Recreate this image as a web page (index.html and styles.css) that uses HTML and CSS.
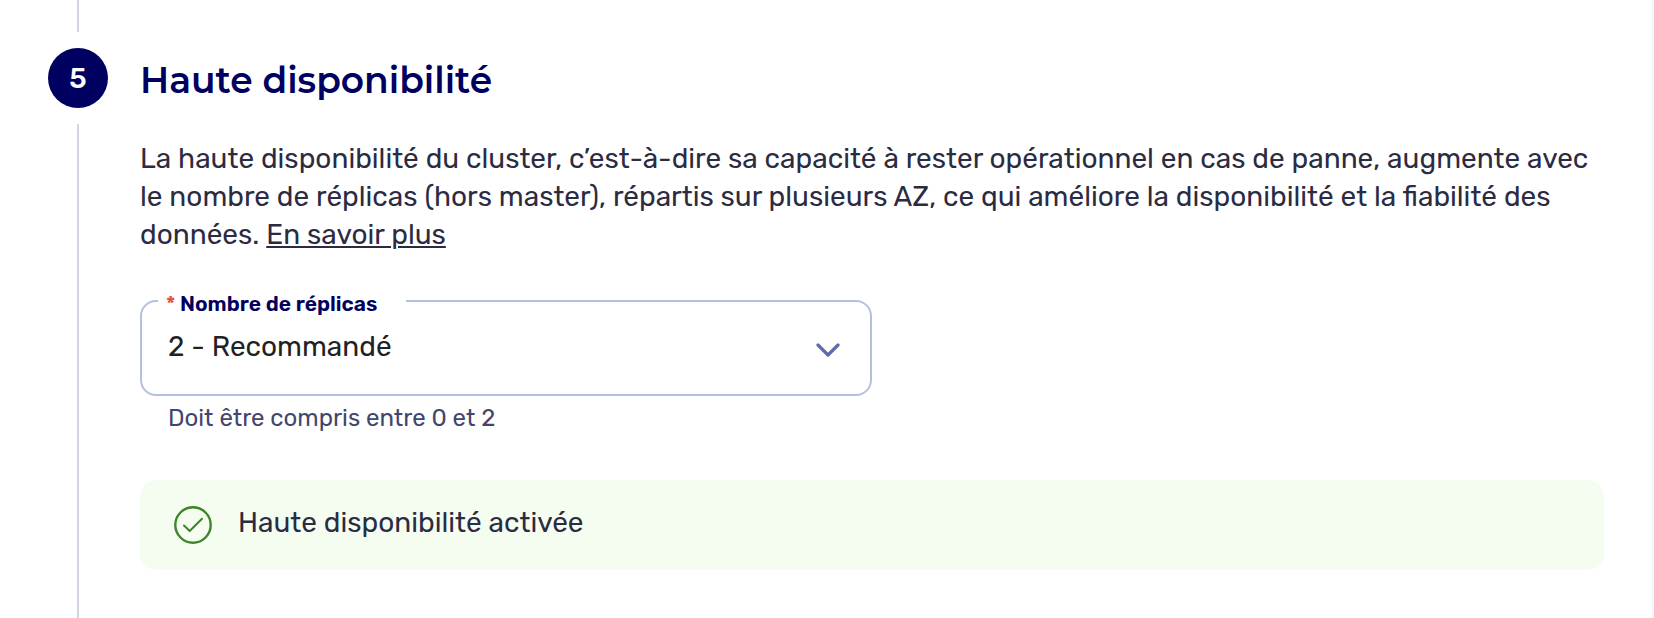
FILE: index.html
```html
<!DOCTYPE html>
<html lang="fr">
<head>
    <meta charset="UTF-8">
    <meta name="viewport" content="width=device-width, initial-scale=1.0">
    <title>Haute disponibilité</title>
    <link rel="stylesheet" href="styles.css">
</head>
<body>

    <main class="panel">
        <section class="step">
            <div class="step-rail">
                <span class="step-line step-line-top"></span>
                <span class="step-number">5</span>
                <span class="step-line step-line-bottom"></span>
            </div>

            <div class="step-content">
                <h2 class="step-title">Haute disponibilité</h2>

                <p class="step-description">
                    La haute disponibilité du cluster, c’est-à-dire sa capacité à rester opérationnel en cas de panne, augmente avec
                    le nombre de réplicas (hors master), répartis sur plusieurs AZ, ce qui améliore la disponibilité et la fiabilité des
                    données. <a href="#">En savoir plus</a>
                </p>

                <div class="field">
                    <label class="field-label" for="replicas"><span class="required">*</span> Nombre de réplicas</label>
                    <select class="field-select" id="replicas" aria-describedby="replicasHint">
                        <option value="0">0</option>
                        <option value="1">1</option>
                        <option value="2" selected>2 - Recommandé</option>
                    </select>
                    <svg class="field-chevron" width="24" height="16" viewBox="0 0 24 16" aria-hidden="true">
                        <path d="M2 3 L12 13 L22 3" fill="none" stroke="#5f6bab" stroke-width="3.2" stroke-linecap="round" stroke-linejoin="round"/>
                    </svg>
                </div>
                <p class="field-hint" id="replicasHint">Doit être compris entre 0 et 2</p>

                <div class="alert" role="status">
                    <svg class="alert-icon" width="38" height="38" viewBox="0 0 38 38" aria-hidden="true">
                        <g fill="none" stroke="#3d8529" stroke-width="2" stroke-linecap="round" stroke-linejoin="round">
                            <circle cx="19" cy="19" r="17.7" stroke-width="2.4"/>
                            <path d="M10 19.5 L15.7 25 L28 12.8"/>
                        </g>
                    </svg>
                    <span>Haute disponibilité activée</span>
                </div>
            </div>
        </section>
    </main>

</body>
</html>
```

FILE: styles.css
```css
*, *::before, *::after {
    box-sizing: border-box;
    margin: 0;
    padding: 0;
}

body {
    font-family: Rubik, Roboto, sans-serif;
    font-size: 28px;
    color: #2b2b42;
    background-color: #fff;
}

.panel {
    min-height: 100vh;
    display: flex;
    border-right: 2px solid #f5f5fe;
}

.step {
    flex: 1;
    display: flex;
    gap: 32px;
    padding: 0 48px;
}

/* Step number with the line running through */
.step-rail {
    flex: 0 0 60px;
    display: flex;
    flex-direction: column;
    align-items: center;
    gap: 16px;
}

.step-line {
    width: 2px;
    background-color: #d3d5e0;
}

.step-line-top {
    height: 32px;
}

.step-line-bottom {
    flex: 1;
}

.step-number {
    width: 60px;
    height: 60px;
    border-radius: 50%;
    display: flex;
    align-items: center;
    justify-content: center;
    background-color: #000061;
    color: #fff;
    font-weight: 500;
}

.step-content {
    flex: 1;
    min-width: 0;
    padding: 56px 0 48px;
}

.step-title {
    font-family: Montserrat, Inter, sans-serif;
    font-size: 36px;
    font-weight: 600;
    line-height: 48px;
    color: #000061;
}

.step-description {
    margin-top: 36px;
    line-height: 38px;
}

.step-description a {
    color: inherit;
    text-decoration-thickness: 2px;
    text-underline-offset: 2px;
}

/* Select with the label sitting on its border */
.field {
    position: relative;
    width: 50%;
    margin-top: 46px;
}

.field-label {
    position: absolute;
    top: -9px;
    left: 18px;
    padding: 0 29px 0 8px;
    background-color: #fff;
    color: #000061;
    font-size: 21px;
    font-weight: 600;
    line-height: 26px;
}

.required {
    color: #e8533f;
}

.field-select {
    display: block;
    width: 100%;
    height: 96px;
    padding: 0 72px 4px 26px;
    border: 2px solid #b4c1de;
    border-radius: 16px;
    appearance: none;
    background-color: #fff;
    color: #212121;
    font: inherit;
}

.field-chevron {
    position: absolute;
    top: 42px;
    right: 32px;
    pointer-events: none;
}

.field-hint {
    padding: 6px 28px;
    font-size: 24px;
    line-height: 32px;
    color: #42466e;
}

.alert {
    display: flex;
    gap: 26px;
    min-height: 90px;
    margin-top: 40px;
    padding: 26px 34px;
    border-radius: 16px;
    background-color: #f5fdf1;
    line-height: 34px;
}

.alert-icon {
    flex: none;
}
```
